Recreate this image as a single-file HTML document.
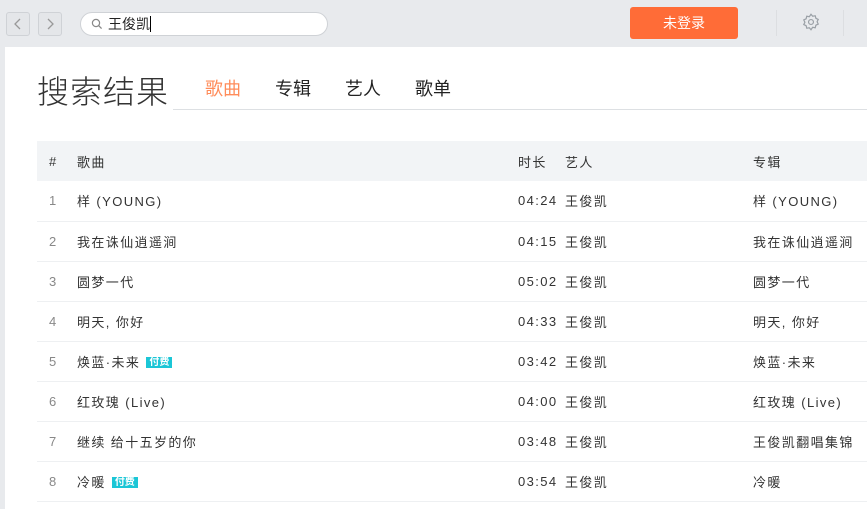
<!DOCTYPE html>
<html><head><meta charset="utf-8"><style>
*{margin:0;padding:0;box-sizing:border-box}
body{width:867px;height:509px;overflow:hidden;background:#e8eaed;font-family:"Liberation Sans","Noto Sans CJK SC",sans-serif;position:relative}
.top{position:absolute;left:0;top:0;width:867px;height:46px;background:#e8eaed}
.nav{position:absolute;top:12px;width:24px;height:24px;border:1px solid #cfd2d6;border-radius:3px;background:#e4e6e9}
.search{position:absolute;left:80px;top:12px;width:248px;height:24px;border:1px solid #cfd2d6;border-radius:12px;background:#fff;font-size:14px;line-height:22px;padding-left:27px;color:#222}
.login{position:absolute;left:630px;top:7px;width:108px;height:32px;background:#ff6c37;border-radius:3px;color:#fff;font-size:14px;text-align:center;line-height:32px}
.sep{position:absolute;top:10px;width:1px;height:26px;background:#dcdee1}
.main{position:absolute;left:5px;top:47px;width:862px;height:462px;background:#fff}
.title{position:absolute;left:32px;top:20px;font-size:32px;color:#333;font-weight:300;letter-spacing:1px}
.tabs{position:absolute;left:168px;top:28px;font-size:18px;color:#222}
.tabs span{position:absolute;white-space:nowrap}
.tabline{position:absolute;left:168px;top:62px;width:700px;height:1px;background:#dde0e3}
table{position:absolute;left:32px;top:94px;width:840px;border-collapse:collapse;font-size:13px;color:#333;letter-spacing:1.4px}
td{height:40px;border-bottom:1px solid #eef0f2;white-space:nowrap;padding:0}
tr.h td{background:#f2f4f6;border:none}
.n{width:40px;color:#888;padding-left:12px}
.tag{display:inline-block;background:#1bc6d6;color:#fff;font-size:10px;line-height:11px;padding:0 3px;margin-left:6px;vertical-align:2px;font-weight:bold;letter-spacing:0}
</style></head><body>
<div class="top">
<div class="nav" style="left:6px"><svg width="22" height="22" viewBox="0 0 22 22"><path d="M13 6l-5 5 5 5" fill="none" stroke="#999" stroke-width="1.3"/></svg></div>
<div class="nav" style="left:38px"><svg width="22" height="22" viewBox="0 0 22 22"><path d="M9 6l5 5-5 5" fill="none" stroke="#999" stroke-width="1.3"/></svg></div>
<div class="search"><svg style="position:absolute;left:10px;top:5px" width="12" height="12" viewBox="0 0 12 12"><circle cx="5" cy="5" r="3.6" fill="none" stroke="#888" stroke-width="1.2"/><path d="M7.6 7.6l3 3" stroke="#888" stroke-width="1.3"/></svg>王俊凯<span style="display:inline-block;width:1px;height:16px;background:#000;vertical-align:-3px"></span></div>
<div class="login">未登录</div>
<div class="sep" style="left:776px"></div>
<svg style="position:absolute;left:801px;top:12px" width="20" height="20" viewBox="0 0 18 18"><path d="M9 2l1.5 1.8 2.3-.4.6 2.3 2.1 1-1 2.1 1 2.1-2.1 1-.6 2.3-2.3-.4L9 16l-1.5-1.8-2.3.4-.6-2.3-2.1-1 1-2.1-1-2.1 2.1-1 .6-2.3 2.3.4z" fill="none" stroke="#9aa0a6" stroke-width="1.1"/><circle cx="9" cy="9" r="2.2" fill="none" stroke="#9aa0a6" stroke-width="1.1"/></svg>
<div class="sep" style="left:843px"></div>
</div>
<div class="main">
<div class="title">搜索结果</div>
<div class="tabs"><span style="left:32px;color:#ff8c5a">歌曲</span><span style="left:102px">专辑</span><span style="left:172px">艺人</span><span style="left:242px">歌单</span></div>
<div class="tabline"></div>
<table>
<tr class="h"><td class="n" style="color:#333">#</td><td style="width:441px">歌曲</td><td style="width:47px">时长</td><td style="width:188px">艺人</td><td>专辑</td></tr>
<tr><td class="n">1</td><td>样 (YOUNG)</td><td>04:24</td><td>王俊凯</td><td>样 (YOUNG)</td></tr>
<tr><td class="n">2</td><td>我在诛仙逍遥涧</td><td>04:15</td><td>王俊凯</td><td>我在诛仙逍遥涧</td></tr>
<tr><td class="n">3</td><td>圆梦一代</td><td>05:02</td><td>王俊凯</td><td>圆梦一代</td></tr>
<tr><td class="n">4</td><td>明天, 你好</td><td>04:33</td><td>王俊凯</td><td>明天, 你好</td></tr>
<tr><td class="n">5</td><td>焕蓝·未来<span class="tag">付费</span></td><td>03:42</td><td>王俊凯</td><td>焕蓝·未来</td></tr>
<tr><td class="n">6</td><td>红玫瑰 (Live)</td><td>04:00</td><td>王俊凯</td><td>红玫瑰 (Live)</td></tr>
<tr><td class="n">7</td><td>继续 给十五岁的你</td><td>03:48</td><td>王俊凯</td><td>王俊凯翻唱集锦</td></tr>
<tr><td class="n">8</td><td>冷暖<span class="tag">付费</span></td><td>03:54</td><td>王俊凯</td><td>冷暖</td></tr>
</table>
</div>
</body></html>
